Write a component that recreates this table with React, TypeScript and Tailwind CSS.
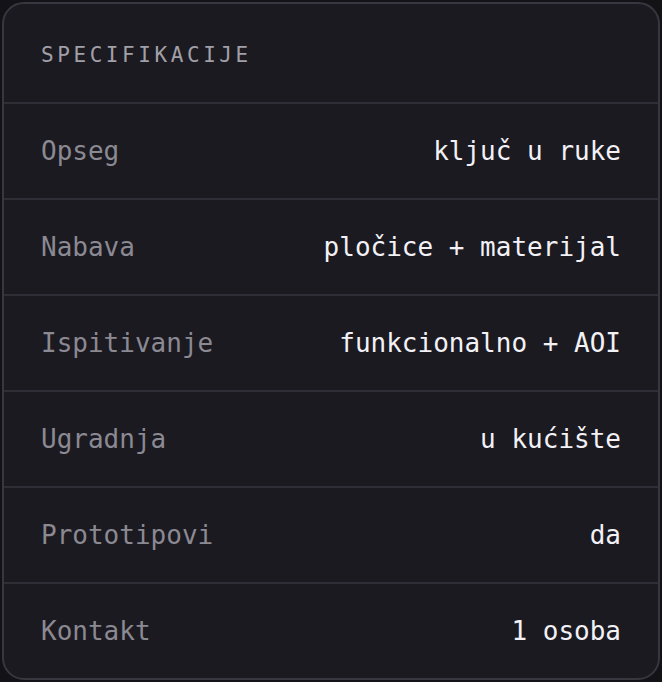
const rows = [
  { label: "Opseg", value: "ključ u ruke" },
  { label: "Nabava", value: "pločice + materijal" },
  { label: "Ispitivanje", value: "funkcionalno + AOI" },
  { label: "Ugradnja", value: "u kućište" },
  { label: "Prototipovi", value: "da" },
  { label: "Kontakt", value: "1 osoba" },
];

export default function App() {
  return (
    <div className="min-h-screen bg-[#131217] p-[2px] font-['DejaVu_Sans_Mono','Liberation_Mono',monospace]">
      <div className="flex h-[678px] flex-col overflow-hidden rounded-[22px] border-2 border-[#38363e] bg-[#1b1a21]">
        {/* header */}
        <div className="flex h-[100px] shrink-0 items-center border-b-2 border-[#2f2d35] px-[37px] pt-[6px]">
          <h2 className="text-[21px] tracking-[0.17em] text-[#a19fa8]">SPECIFIKACIJE</h2>
        </div>

        {rows.map((row, i) => (
          <div
            key={row.label}
            className={
              i < rows.length - 1
                ? "flex h-[96px] shrink-0 items-center justify-between border-b-2 border-[#2f2d35] px-[37px]"
                : "flex flex-1 items-center justify-between px-[37px]"
            }
          >
            <span className="text-[26px] text-[#8b8992]">{row.label}</span>
            <span className="text-[26px] font-medium text-[#f2f1f6]">{row.value}</span>
          </div>
        ))}
      </div>
    </div>
  );
}
